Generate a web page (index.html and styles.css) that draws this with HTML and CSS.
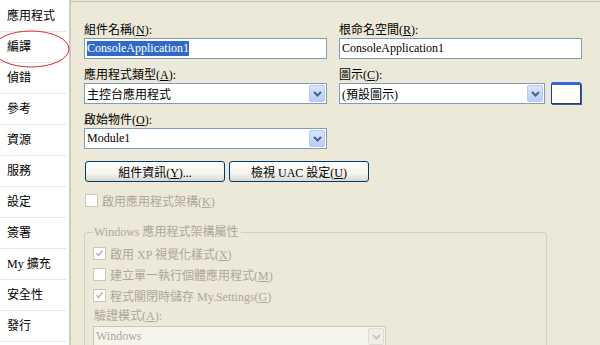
FILE: index.html
```html
<!DOCTYPE html>
<html lang="zh-Hant">
<head>
    <meta charset="UTF-8">
    <title>專案屬性</title>
    <link rel="stylesheet" href="styles.css">
</head>
<body>
    <div class="window">
        <ul class="tabs">
            <li>應用程式</li>
            <li>編譯</li>
            <li>偵錯</li>
            <li>參考</li>
            <li>資源</li>
            <li>服務</li>
            <li>設定</li>
            <li>簽署</li>
            <li>My 擴充</li>
            <li>安全性</li>
            <li>發行</li>
        </ul>

        <div class="page">
            <div class="fields">
                <div class="field">
                    <label>組件名稱(<u>N</u>):</label>
                    <div class="textbox"><span class="selected">ConsoleApplication1</span></div>
                </div>
                <div class="field">
                    <label>根命名空間(<u>R</u>):</label>
                    <div class="textbox">ConsoleApplication1</div>
                </div>
                <div class="field">
                    <label>應用程式類型(<u>A</u>):</label>
                    <div class="combo">
                        <span class="value">主控台應用程式</span>
                        <span class="drop"><svg width="9" height="6" viewBox="0 0 9 6"><path d="M1 1 L4.5 4.5 L8 1" fill="none" stroke="#4d6185" stroke-width="2"/></svg></span>
                    </div>
                </div>
                <div class="field">
                    <label>圖示(<u>C</u>):</label>
                    <div class="icon-row">
                        <div class="combo">
                            <span class="value">(預設圖示)</span>
                            <span class="drop"><svg width="9" height="6" viewBox="0 0 9 6"><path d="M1 1 L4.5 4.5 L8 1" fill="none" stroke="#4d6185" stroke-width="2"/></svg></span>
                        </div>
                        <div class="preview"><span class="title-bar"></span></div>
                    </div>
                </div>
                <div class="field">
                    <label>啟始物件(<u>O</u>):</label>
                    <div class="combo">
                        <span class="value">Module1</span>
                        <span class="drop"><svg width="9" height="6" viewBox="0 0 9 6"><path d="M1 1 L4.5 4.5 L8 1" fill="none" stroke="#4d6185" stroke-width="2"/></svg></span>
                    </div>
                </div>
            </div>

            <div class="buttons">
                <button>組件資訊(<u>Y</u>)...</button>
                <button>檢視 UAC 設定(<u>U</u>)</button>
            </div>

            <div class="check disabled">
                <span class="box"></span>
                <span>啟用應用程式架構(<u>K</u>)</span>
            </div>

            <fieldset class="group">
                <legend>Windows 應用程式架構屬性</legend>
                <div class="check disabled">
                    <span class="box checked"><svg width="9" height="9" viewBox="0 0 9 9"><path d="M1.5 4 L3.5 6.5 L7.5 1.5" fill="none" stroke="#b9b7ab" stroke-width="1.6"/></svg></span>
                    <span>啟用 XP 視覺化樣式(<u>X</u>)</span>
                </div>
                <div class="check disabled">
                    <span class="box"></span>
                    <span>建立單一執行個體應用程式(<u>M</u>)</span>
                </div>
                <div class="check disabled">
                    <span class="box checked"><svg width="9" height="9" viewBox="0 0 9 9"><path d="M1.5 4 L3.5 6.5 L7.5 1.5" fill="none" stroke="#b9b7ab" stroke-width="1.6"/></svg></span>
                    <span>程式關閉時儲存 My.Settings(<u>G</u>)</span>
                </div>
                <label class="sub-label">驗證模式(<u>A</u>):</label>
                <div class="combo off">
                    <span class="value">Windows</span>
                    <span class="drop"><svg width="9" height="6" viewBox="0 0 9 6"><path d="M1 1 L4.5 4.5 L8 1" fill="none" stroke="#c9c7ba" stroke-width="2"/></svg></span>
                </div>
            </fieldset>
        </div>

        <!-- 紅色圈選標記 -->
        <svg class="mark" width="90" height="50" viewBox="0 0 90 50">
            <ellipse cx="37" cy="24" rx="38" ry="18" fill="none" stroke="#e0282c" stroke-width="1"/>
        </svg>
    </div>
</body>
</html>
```

FILE: styles.css
```css
* {
    margin: 0;
    padding: 0;
    box-sizing: border-box;
}

body {
    font-family: "Liberation Serif", "Noto Sans CJK TC", serif;
    font-size: 12px;
    color: #000;
    background: #ece9d8;
}

.window {
    position: relative;
    display: flex;
    width: 600px;
    height: 345px;
    overflow: hidden;
}

/* 左側分頁 */
.tabs {
    list-style: none;
    width: 71px;
    flex-shrink: 0;
    background: #fff;
    border-right: 2px solid #cfccbe;
    padding-top: 1px;
}

.tabs li {
    height: 31px;
    line-height: 30px;
    padding-left: 7px;
    margin: 0 3px 0 0;
    border-bottom: 1px solid #e6e6e6;
}

/* 右側內容 */
.page {
    flex: 1;
    margin-top: 1px;
    border-top: 1px solid #c3c0b2;
    padding: 21px 0 0 13px;
}

.fields {
    display: grid;
    grid-template-columns: 243px 243px;
    column-gap: 12px;
}

.field {
    margin-bottom: 9px;
}

.field label,
.sub-label {
    display: block;
    height: 14px;
    line-height: 14px;
    margin-bottom: 1px;
}

.textbox,
.combo {
    display: flex;
    align-items: center;
    height: 21px;
    background: #fff;
    border: 1px solid #7f9db9;
    padding-left: 2px;
    white-space: nowrap;
}

.selected {
    background: #316ac5;
    color: #fff;
    line-height: 15px;
}

.combo .value {
    flex: 1;
}

.drop {
    display: flex;
    align-items: center;
    justify-content: center;
    width: 16px;
    height: 17px;
    margin-right: 1px;
    background: linear-gradient(#d8e4fc, #b9cdf8);
    border: 1px solid #b7c9f0;
    border-radius: 2px;
}

.icon-row {
    display: flex;
    align-items: flex-start;
    gap: 6px;
}

.icon-row .combo {
    width: 206px;
}

.preview {
    width: 30px;
    height: 22px;
    margin-top: -1px;
    background: #fffff6;
    border: 1px solid #1c3f8f;
    border-top: 3px solid #2f6ad6;
    box-shadow: 1px 1px 0 #4a5d8a;
    border-radius: 2px 2px 0 0;
}

/* 按鈕 */
.buttons {
    display: flex;
    gap: 4px;
    margin: 3px 0 0 1px;
}

.buttons button {
    width: 140px;
    height: 21px;
    font-family: inherit;
    font-size: 12px;
    color: #000;
    border: 1px solid #003c74;
    border-radius: 3px;
    background: linear-gradient(#ffffff 0%, #f4f3ee 60%, #dcd8cc 100%);
}

/* 核取方塊 */
.check {
    display: flex;
    align-items: center;
    gap: 4px;
    height: 21px;
}

.page > .check {
    margin: 8px 0 0 1px;
}

.check.disabled {
    color: #aca899;
}

.box {
    display: flex;
    align-items: center;
    justify-content: center;
    width: 13px;
    height: 13px;
    background: #fff;
    border: 1px solid #cac8bb;
}

/* 群組 */
.group {
    width: 463px;
    margin-top: 14px;
    border: 1px solid #d0d0bf;
    border-radius: 3px;
    padding: 4px 0 0 8px;
}

.group legend {
    margin-left: 1px;
    padding: 0 2px 0 0;
    color: #aca899;
    line-height: 14px;
}

.group .sub-label {
    color: #aca899;
    margin: 3px 0 3px 1px;
}

.combo.off {
    width: 293px;
    background: #f5f4ea;
    border-color: #c9c7ba;
    color: #aca899;
}

.combo.off .drop {
    background: #efeee6;
    border-color: #dedcd0;
}

/* 圈選標記 */
.mark {
    position: absolute;
    left: -6px;
    top: 25px;
}
```
